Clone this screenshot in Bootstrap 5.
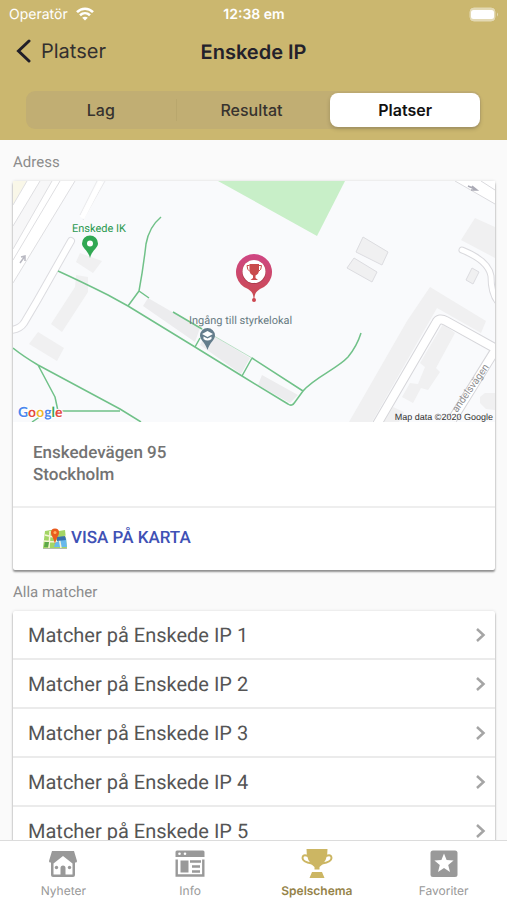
<!DOCTYPE html>
<html lang="sv">
<head>
<meta charset="utf-8">
<meta name="viewport" content="width=device-width, initial-scale=1">
<title>Enskede IP</title>
<link href="https://cdn.jsdelivr.net/npm/bootstrap@5.3.0/dist/css/bootstrap.min.css" rel="stylesheet">
<style>
  body { font-family: Roboto, "Liberation Sans", sans-serif; background: #fafafa; color: #555; text-rendering: geometricPrecision; }
  svg { display: block; }
  .app-header { background: #cbb76f; font-family: Inter, "Liberation Sans", sans-serif; color: #23212b; }
  .status-bar { height: 28px; padding: 0 8px 0 9px; font-size: 14px; color: #fff; }
  .nav-row { height: 48px; padding: 0 16px; }
  .back-link { color: #33302f; font-size: 20px; gap: 10px; }
  .page-title { font-size: 20px; font-weight: 600; }
  .segments { margin: 15px 26px 11px; height: 38px; padding: 2px 1px 2px 0; border-radius: 9px; background: #c1ae73; }
  .segment { border: 0; background: none; font-size: 16px; font-weight: 500; color: #37332f; border-radius: 8px; }
  .segment-divider { width: 1px; margin: 6px 0; background: #b9a76d; }
  .segment.active { margin-left: 4px; background: #fff; color: #111; font-weight: 600; box-shadow: 0 2px 4px #00000030; }
  .content { padding: 0 12px 0 13px; min-height: 0; }
  .section-label { padding: 13px 0 10px; font-size: 15px; line-height: 18px; color: #8c8c8c; }
  .panel { background: #fff; border-radius: 2px; box-shadow: 0 2px 2px #00000066, 0 0 3px #00000022; }
  .address { padding: 20px; font-size: 17px; line-height: 22px; font-weight: 500; color: #737373; }
  .map-action { height: 64px; padding: 0 30px; gap: 4px; border-top: 2px solid #eee; }
  .map-action a { color: #3f51b5; font-size: 17px; font-weight: 500; }
  .match-row { height: 49px; padding: 0 9px 0 15px; font-size: 20px; color: #555; border-bottom: 2px solid #ebebeb; }
  .tab-bar { height: 60px; background: #fff; border-top: 1px solid #dcdcdc; font-family: Inter, "Liberation Sans", sans-serif; font-size: 12px; }
  .tab-item { color: #999; padding-top: 7px; gap: 4px; }
  .tab-item.active { color: #958349; font-weight: 600; }
</style>
<script src="https://cdn.jsdelivr.net/npm/bootstrap@5.3.0/dist/js/bootstrap.bundle.min.js"></script>
</head>
<body class="vh-100 d-flex flex-column overflow-hidden">
<header class="app-header flex-shrink-0">
  <div class="status-bar row g-0 align-items-center">
    <div class="col d-flex align-items-center gap-2">
      <span>Operatör</span>
      <svg width="18" height="14" viewBox="0 0 18 14" fill="none" stroke="#fff" stroke-width="2.6"><path d="M1 5.2C5.500 .6 12.500 .6 17 5.200M4 8.300c3-2.800 7-2.800 10 0"/><path d="M9 13.500 6.200 10.700c1.500-1.400 4.100-1.400 5.600 0z" fill="#fff" stroke="none"/></svg>
    </div>
    <div class="col-auto fw-semibold">12:38 em</div>
    <div class="col d-flex justify-content-end">
      <svg width="30" height="15" viewBox="0 0 30 15"><rect x="1" y="1" width="25" height="13" rx="4" fill="#e3d9b4" stroke="#e3d9b4"/><rect x="2" y="3" width="23" height="9" rx="2.500" fill="#fff"/><path d="M28 5.500q2 2 0 4z" fill="#e3d9b4"/></svg>
    </div>
  </div>
  <div class="nav-row row g-0 align-items-center">
    <div class="col"><a href="#" class="back-link d-inline-flex align-items-center text-decoration-none"><svg width="15" height="24" viewBox="0 0 15 24" fill="none" stroke="#201e28" stroke-width="3" stroke-linecap="round"><path d="M13 2 2.500 12 13 22"/></svg>Platser</a></div>
    <h1 class="page-title col-auto m-0">Enskede IP</h1>
    <div class="col"></div>
  </div>
  <div class="segments d-flex">
    <button type="button" class="segment flex-fill w-100">Lag</button>
    <div class="segment-divider flex-shrink-0"></div>
    <button type="button" class="segment flex-fill w-100">Resultat</button>
    <button type="button" class="segment active flex-fill w-100">Platser</button>
  </div>
</header>

<main class="content flex-grow-1 overflow-hidden">
  <h2 class="section-label fw-normal m-0">Adress</h2>
  <section class="panel">
    <svg class="w-100 h-auto" viewBox="13 181 482 241" role="img" aria-label="Karta" fill="none">
      <rect x="13" y="181" width="482" height="241" fill="#f9fafc"/>
      <!-- roads, upper left -->
      <path d="M13 181H27L13 205z" fill="#f9f7e8"/>
      <path d="M27 181H75L13 283V205z" fill="#fff"/>
      <path d="M40 181H52L13 249V226z" fill="#f7f7f8"/>
      <g stroke="#dedee1"><path d="M27 181 13 205M40 181 13 226M52 181 13 249M60 181 13 260M75 181 13 283"/><path d="M97 181 80 215M105 181 83 220" stroke="#e9e9eb"/></g>
      <path d="M101 181 82 218" stroke="#fff" stroke-width="5"/>
      <path d="M71 241 37 301 24 323Q20 329 11 330" stroke="#dcdce0" stroke-width="8" stroke-linecap="round"/>
      <path d="M71 241 37 301 24 323Q20 329 11 330" stroke="#fff" stroke-width="6" stroke-linecap="round"/>
      <path d="m20 263 5-7m-4 1 4-1v5" stroke="#b9b9c2" stroke-width="1.500"/>
      <!-- pitch -->
      <path d="M218 181H345L317 236z" fill="#c8efc8"/>
      <!-- buildings -->
      <g fill="#f0f0f1">
        <path d="M80 253 102 261 93 273 76 262zM75 287 76 275 88 277 88 292 62 332 51 324zM38 332 64 348 57 361 29 344z"/>
        <path d="M148 298 200 328 195 342 143 306zM207 332 250 358 241 374 200 345zM262 375 298 395 290 403 258 385z" fill="#ececee"/>
        <path d="M475 218 495 227V258L461 240zM430 287 486 321 481 333 437 308 372 422H349L407 321z"/>
        <path d="M443 324 455 333 436 368 440 372 428 390 421 388 413 403 402 397 410 383 418 384 425 367 420 363zM393 407 404 412 399 422H384zM480 397 485 393 495 393V410L486 409 480 403z"/>
        <path d="M363 237 388 252 382 265 356 252zM354 258 377 272 372 282 347 268zM472 268 479 272 473 284 466 280z" stroke="#dcdce0"/>
      </g>
      <!-- roads, right -->
      <path d="M455 181 495 204V181z" fill="#fff"/><path d="M455 181 495 204M481 181 495 190" stroke="#dadade"/>
      <path d="m468 186 9 4m-5-4 5 4h-6" stroke="#aaaab5" stroke-width="1.500"/>
      <path d="M462 250C477 256 489 264 491 276 491 287 493 297 499 303" stroke="#d9d9dd" stroke-width="7" stroke-linecap="round"/>
      <path d="M462 250C477 256 489 264 491 276 491 287 493 297 499 303" stroke="#fff" stroke-width="5" stroke-linecap="round"/>
      <path d="M376 426 436 323Q439 317 446 321L500 351M496 349 452 420" stroke="#d6d6da" stroke-width="10"/>
      <path d="M376 426 436 323Q439 317 446 321L500 351M496 349 452 420" stroke="#fff" stroke-width="8"/>
      <!-- footpaths -->
      <g stroke="#70c188" stroke-width="1.500" stroke-linejoin="round">
        <path d="M58 271Q80 281 108 295L128 306 195 347 242 376 288 404Q292 407 295 402L303 391 252 358 242 376"/>
        <path d="M161 217Q149 227 146 244 143 270 139 291L128 306M139 291 149 298M173 312 202 329M195 347 200 338"/>
        <path d="M202 329 252 358" stroke-width="1" stroke="#bce0c7"/>
        <path d="M303 391C315 377 337 369 348 357Q357 346 361 333"/>
        <path d="M13 348Q23 356 38 365L120 409 141 422M38 365 55 397 58 411H120M32 422 41 416"/>
      </g>
      <!-- place markers -->
      <path d="M90 258C88 250 82 248 82 243.500a8 8 0 0 1 16 0C98 248 92 250 90 258z" fill="#31a853"/><circle cx="90" cy="243.500" r="3" fill="#fff"/>
      <path d="M207.500 350C205 342 200 340 200 335.500a7.500 7.500 0 0 1 15 0C215 340 210 342 207.500 350z" fill="#647d8c"/><path d="m202 334 5.500-3 5.500 3-5.500 3zM203.500 336.500l4 2 4-2v2.500q-4 3-8 0z" fill="#fff"/>
      <defs><linearGradient id="pinShade" x2="0" y2="1"><stop stop-color="#cf4684"/><stop offset="1" stop-color="#c94b4b"/></linearGradient></defs>
      <path d="M254 302C253 295 254 293 248 289A18 18 0 1 1 260 289C254 293 255 295 254 302z" fill="url(#pinShade)"/>
      <circle cx="254" cy="300" r="2" fill="#cc4650"/>
      <circle cx="254" cy="272" r="12" fill="#aa3c4b"/><circle cx="254" cy="271.500" r="11.500" fill="#fff"/>
      <path d="M249.500 264H259V270Q259 274 255.500 275.500V278L258 280H250.500L253 278V275.500Q249.500 274 249.500 270z" fill="#c94b4b"/><path d="M249.500 265.500H247Q247 270 250 271.500M259 265.500H261.500Q261.500 270 258.500 271.500" stroke="#c94b4b"/>
      <g font-family="Roboto, sans-serif">
        <text x="72" y="232" font-size="11" fill="#2c9950">Enskede IK</text>
        <text x="189" y="324" font-size="11" fill="#687b82">Ingång till styrkelokal</text>
        <text transform="translate(457 413) rotate(-55)" font-size="10" fill="#8b8b8e">andelsvägen</text>
      </g>
      <text x="493" y="420" text-anchor="end" font-family="Liberation Sans, sans-serif" font-size="9" fill="#333">Map data ©2020 Google</text>
      <text x="18" y="417" font-family="Lato, sans-serif" font-size="14" font-weight="700" stroke="#fff" stroke-width="2" paint-order="stroke"><tspan fill="#4a87ee">G</tspan><tspan fill="#e34a3f">o</tspan><tspan fill="#efb82c">o</tspan><tspan fill="#4a87ee">g</tspan><tspan fill="#3ba65a">l</tspan><tspan fill="#e34a3f">e</tspan></text>
    </svg>
    <address class="address mb-0">Enskedevägen 95<br>Stockholm</address>
    <div class="map-action d-flex align-items-center">
      <svg width="24" height="22" viewBox="0 0 24 22"><path d="M2 3 8 2 16 3 22 2 24 20H0z" fill="#a3d565"/><path d="M13 12 23 10 24 19H11z" fill="#68b9ec"/><path d="M1 13 12 14 23 8M7 3 6 20M16 9 18 20M2 7 10 9" stroke="#f6f5d8" stroke-width="1.500" fill="none"/><path d="M14 9 22 8 23 12 14 13z" fill="#376fac"/><path d="M2 14 6 14 5 19 1 19z" fill="#5da849"/><path d="M0 20H24V21H0z" fill="#b4bba9"/><path d="M12 16C11 10 8 8 8 4.500a4 4 0 0 1 8 0C16 8 13 10 12 16z" fill="#e95b1e"/><circle cx="12" cy="4.500" r="1.500" fill="#ffb25e"/></svg>
      <a href="#" class="text-decoration-none">VISA PÅ KARTA</a>
    </div>
  </section>

  <h2 class="section-label fw-normal m-0">Alla matcher</h2>
  <nav class="panel" aria-label="Alla matcher">
    <a href="#" class="match-row d-flex align-items-center justify-content-between text-decoration-none">Matcher på Enskede IP 1<svg width="11" height="16" viewBox="0 0 11 16" fill="none" stroke="#a5a5a5" stroke-width="2.500"><path d="m2 2 6.500 6L2 14"/></svg></a>
    <a href="#" class="match-row d-flex align-items-center justify-content-between text-decoration-none">Matcher på Enskede IP 2<svg width="11" height="16" viewBox="0 0 11 16" fill="none" stroke="#a5a5a5" stroke-width="2.500"><path d="m2 2 6.500 6L2 14"/></svg></a>
    <a href="#" class="match-row d-flex align-items-center justify-content-between text-decoration-none">Matcher på Enskede IP 3<svg width="11" height="16" viewBox="0 0 11 16" fill="none" stroke="#a5a5a5" stroke-width="2.500"><path d="m2 2 6.500 6L2 14"/></svg></a>
    <a href="#" class="match-row d-flex align-items-center justify-content-between text-decoration-none">Matcher på Enskede IP 4<svg width="11" height="16" viewBox="0 0 11 16" fill="none" stroke="#a5a5a5" stroke-width="2.500"><path d="m2 2 6.500 6L2 14"/></svg></a>
    <a href="#" class="match-row d-flex align-items-center justify-content-between text-decoration-none">Matcher på Enskede IP 5<svg width="11" height="16" viewBox="0 0 11 16" fill="none" stroke="#a5a5a5" stroke-width="2.500"><path d="m2 2 6.500 6L2 14"/></svg></a>
  </nav>
</main>

<nav class="tab-bar row g-0 flex-shrink-0" aria-label="Flikar">
  <a href="#" class="tab-item col d-flex flex-column align-items-center text-decoration-none">
    <svg width="32" height="30" viewBox="0 0 32 30"><path d="M5 3H27L30 13Q30 15 28 14.500V27Q28 29 26 29H6Q4 29 4 27V14.500Q2 15 2 13z" fill="#999"/><path d="M16 8 6.500 15.500V26.500H13.500V20Q13.500 17.500 16 17.500T18.500 20V26.500H25.500V15.500z" fill="#fff"/><circle cx="9.500" cy="19.500" r="1.700" fill="#999"/><circle cx="22.500" cy="19.500" r="1.700" fill="#999"/></svg>Nyheter</a>
  <a href="#" class="tab-item col d-flex flex-column align-items-center text-decoration-none">
    <svg width="32" height="30" viewBox="0 0 32 30"><path d="M1.500 9V4Q1.500 2.500 3 2.500H29Q30.500 2.500 30.500 4V9z" fill="#999"/><circle cx="5.500" cy="5.800" r="1.300" fill="#fff"/><circle cx="11" cy="5.800" r="1.300" fill="#fff"/><path d="M2.700 11.500V27.500H29.300V11.500M16 13.500H27M18 18.500H26M18 23.500H26" fill="none" stroke="#999" stroke-width="2.400"/><path d="M6.500 12.500H14.500V24.500H6.500z" fill="#999"/></svg>Info</a>
  <a href="#" class="tab-item active col d-flex flex-column align-items-center text-decoration-none" aria-current="page">
    <svg width="32" height="30" viewBox="0 0 32 30"><path d="M5.500 1H26.500Q27 13 18.500 19V21.500H13.500V19Q5 13 5.500 1zM11 24H21L23.500 30H8.500z" fill="#ccb663"/><path d="M7 8Q1.500 6 1.500 10T11 15.500M25 8Q30.500 6 30.500 10T21 15.500" fill="none" stroke="#ccb663" stroke-width="2"/></svg>Spelschema</a>
  <a href="#" class="tab-item col d-flex flex-column align-items-center text-decoration-none">
    <svg width="32" height="30" viewBox="0 0 32 30"><rect x="2.500" y="2.500" width="27" height="26.500" rx="2.500" fill="#999"/><path d="m16 5.500 2.600 6.600 7 .4-5.400 4.500 1.800 6.900-6-3.900-6 3.900 1.800-6.900L6.400 12.500l7-.4z" fill="#fff"/></svg>Favoriter</a>
</nav>
</body>
</html>
